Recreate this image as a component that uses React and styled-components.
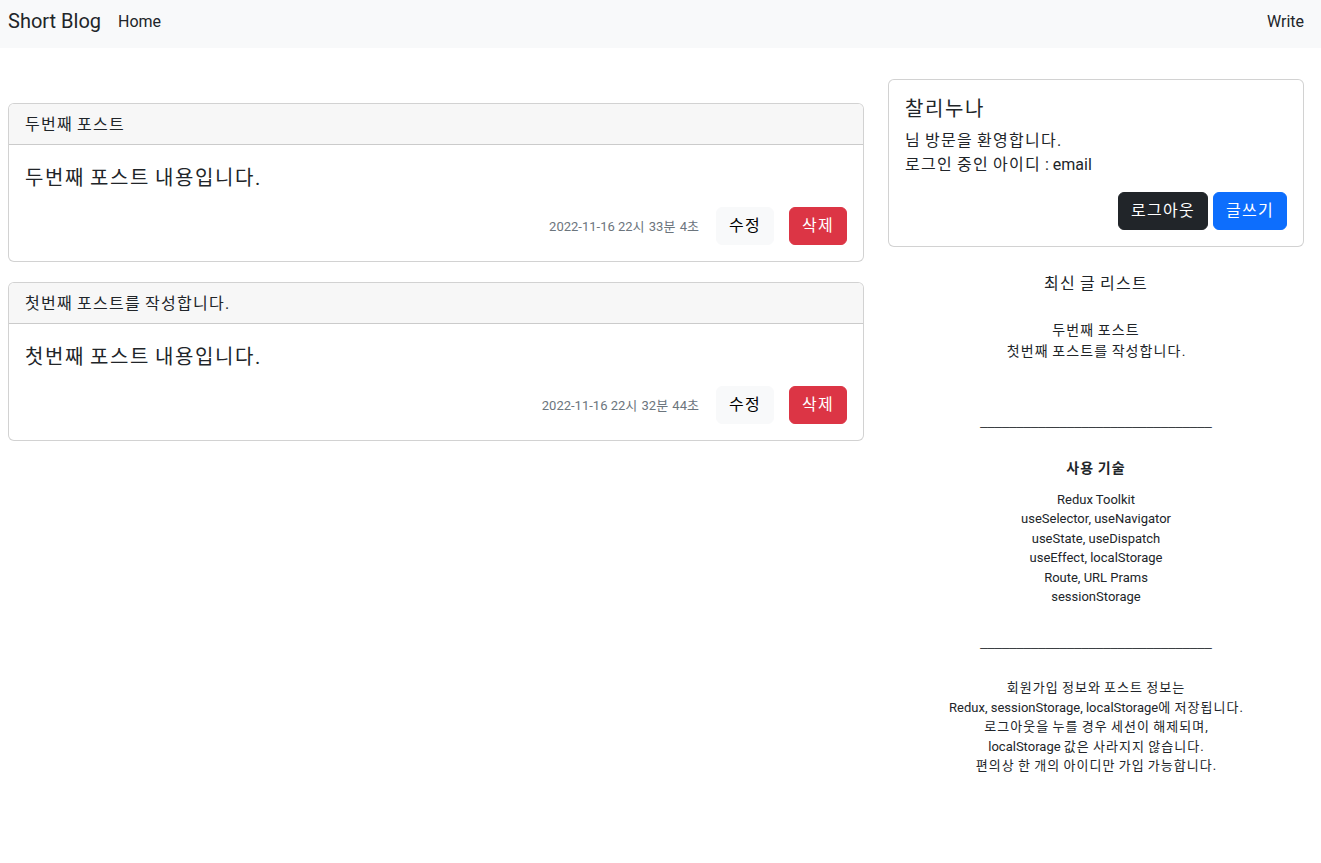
import React from "react";
import styled, { createGlobalStyle } from "styled-components";

const GlobalStyle = createGlobalStyle`
  * { box-sizing: border-box; }
  body {
    margin: 0;
    font-family: Roboto, "Noto Sans CJK KR", sans-serif;
    font-size: 16px;
    line-height: 1.5;
    color: #212529;
    background: #fff;
  }
`;

/* Hangul glyphs in the installed CJK fonts are 0.92em wide; the reference font uses 1em. */
const Hangul = styled.span`
  letter-spacing: 0.08em;
`;

function K({ children }) {
  const parts = String(children).split(/([\uAC00-\uD7A3\u3131-\u318E]+)/);
  return (
    <>
      {parts.map((part, i) =>
        i % 2 === 1 ? <Hangul key={i}>{part}</Hangul> : part
      )}
    </>
  );
}

const Nav = styled.nav`
  height: 48px;
  background: #f8f9fa;
  display: flex;
  align-items: flex-start;
  padding: 7px 17px 0 8px;
`;

const Brand = styled.a`
  font-size: 20px;
  line-height: 30px;
  color: #212529;
  text-decoration: none;
  margin-right: 17px;
  margin-top: -1px;
`;

const NavLink = styled.a`
  font-size: 16px;
  line-height: 30px;
  color: #212529;
  text-decoration: none;
  margin-left: ${(p) => (p.$right ? "auto" : "0")};
`;

const Main = styled.main`
  display: grid;
  grid-template-columns: 856px 416px;
  column-gap: 24px;
  padding: 31px 17px 40px 8px;
  align-items: start;
`;

const PostColumn = styled.section`
  display: flex;
  flex-direction: column;
  gap: 20px;
  margin-top: 24px;
`;

const Card = styled.div`
  border: 1px solid rgba(0, 0, 0, 0.175);
  border-radius: 6px;
  background: #fff;
  overflow: hidden;
`;

const CardHeader = styled.div`
  padding: 9px 16px 7px;
  background: #f7f7f7;
  border-bottom: 1px solid rgba(0, 0, 0, 0.175);
  font-size: 16px;
  line-height: 24px;
`;

const CardBody = styled.div`
  padding: 16px;
`;

const PostText = styled.p`
  margin: 0 0 16px;
  font-size: 20px;
  line-height: 30px;
  padding-top: 2px;
  height: 30px;
`;

const PostFooter = styled.div`
  display: flex;
  justify-content: flex-end;
  align-items: center;
  gap: 15px;
`;

const DateText = styled.span`
  font-size: 13px;
  color: #6c757d;
  margin-right: 1px;
  padding-top: 1px;
`;

const Button = styled.button`
  font-family: inherit;
  font-size: 16px;
  line-height: 24px;
  padding: 6px 12px;
  border-radius: 6px;
  border: 1px solid ${(p) => p.$bg};
  background: ${(p) => p.$bg};
  color: ${(p) => p.$fg};
  cursor: pointer;
`;

const Sidebar = styled.aside`
  display: flex;
  flex-direction: column;
  align-items: stretch;
  text-align: center;
`;

const ProfileBody = styled.div`
  padding: 17px 16px 16px;
  text-align: left;
`;

const ProfileName = styled.h5`
  margin: 0 0 8px;
  font-size: 20px;
  font-weight: 400;
  line-height: 24px;
`;

const ProfileLine = styled.div`
  font-size: 16px;
  line-height: 24px;
`;

const ProfileActions = styled.div`
  display: flex;
  justify-content: flex-end;
  gap: 5px;
  margin-top: 15px;
`;

const SectionTitle = styled.div`
  font-size: 16px;
  line-height: 24px;
  margin-top: 25px;
`;

const Lines = styled.div`
  font-size: ${(p) => p.$size || 13}px;
  line-height: ${(p) => p.$lh || 19.5}px;
  font-weight: ${(p) => (p.$bold ? 700 : 400)};
  margin-top: ${(p) => p.$mt || 0}px;
`;

const Divider = styled.div`
  font-family: "Liberation Sans", sans-serif;
  font-size: 13px;
  line-height: 19.5px;
  margin-top: ${(p) => p.$mt}px;
  white-space: nowrap;
`;

const posts = [
  {
    title: "두번째 포스트",
    content: "두번째 포스트 내용입니다.",
    date: "2022-11-16 22시 33분 4초",
  },
  {
    title: "첫번째 포스트를 작성합니다.",
    content: "첫번째 포스트 내용입니다.",
    date: "2022-11-16 22시 32분 44초",
  },
];

const tech = [
  "Redux Toolkit",
  "useSelector, useNavigator",
  "useState, useDispatch",
  "useEffect, localStorage",
  "Route, URL Prams",
  "sessionStorage",
];

const info = [
  "회원가입 정보와 포스트 정보는",
  "Redux, sessionStorage, localStorage에 저장됩니다.",
  "로그아웃을 누를 경우 세션이 해제되며,",
  "localStorage 값은 사라지지 않습니다.",
  "편의상 한 개의 아이디만 가입 가능합니다.",
];

const UNDERSCORES = "________________________________";

export default function App() {
  return (
    <>
      <GlobalStyle />
      <Nav>
        <Brand href="#">Short Blog</Brand>
        <NavLink href="#">Home</NavLink>
        <NavLink href="#" $right>
          Write
        </NavLink>
      </Nav>
      <Main>
        <PostColumn>
          {posts.map((p) => (
            <Card key={p.title}>
              <CardHeader>
                <K>{p.title}</K>
              </CardHeader>
              <CardBody>
                <PostText>
                  <K>{p.content}</K>
                </PostText>
                <PostFooter>
                  <DateText>
                    <K>{p.date}</K>
                  </DateText>
                  <Button $bg="#f8f9fa" $fg="#000">
                    <K>수정</K>
                  </Button>
                  <Button $bg="#dc3545" $fg="#fff">
                    <K>삭제</K>
                  </Button>
                </PostFooter>
              </CardBody>
            </Card>
          ))}
        </PostColumn>
        <Sidebar>
          <Card>
            <ProfileBody>
              <ProfileName>
                <K>찰리누나</K>
              </ProfileName>
              <ProfileLine>
                <K>님 방문을 환영합니다.</K>
              </ProfileLine>
              <ProfileLine>
                <K>로그인 중인 아이디 : email</K>
              </ProfileLine>
              <ProfileActions>
                <Button $bg="#212529" $fg="#fff">
                  <K>로그아웃</K>
                </Button>
                <Button $bg="#0d6efd" $fg="#fff">
                  <K>글쓰기</K>
                </Button>
              </ProfileActions>
            </ProfileBody>
          </Card>
          <SectionTitle>
            <K>최신 글 리스트</K>
          </SectionTitle>
          <Lines $size={14} $lh={21} $mt={24}>
            <div>
              <K>두번째 포스트</K>
            </div>
            <div>
              <K>첫번째 포스트를 작성합니다.</K>
            </div>
          </Lines>
          <Divider $mt={49}>{UNDERSCORES}</Divider>
          <Lines $size={14} $lh={21} $bold $mt={27}>
            <K>사용 기술</K>
          </Lines>
          <Lines $mt={11}>
            {tech.map((t) => (
              <div key={t}>{t}</div>
            ))}
          </Lines>
          <Divider $mt={25}>{UNDERSCORES}</Divider>
          <Lines $mt={27}>
            {info.map((t) => (
              <div key={t}>
                <K>{t}</K>
              </div>
            ))}
          </Lines>
        </Sidebar>
      </Main>
    </>
  );
}
